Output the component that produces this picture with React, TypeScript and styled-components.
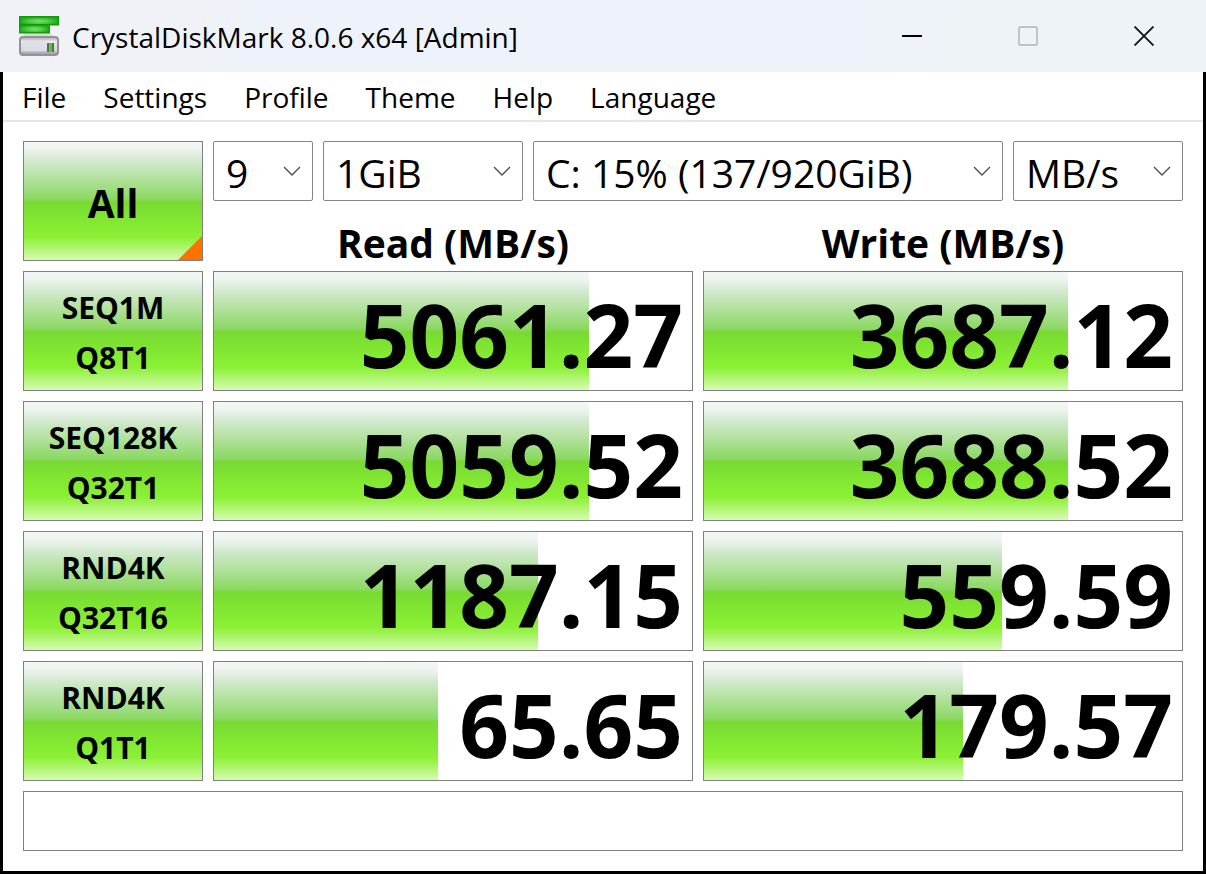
import React from "react";
import styled, { createGlobalStyle } from "styled-components";

const GREEN =
  "linear-gradient(to bottom, #f3f7f5 0%, #edf4ee 7%, #d3e9cf 16%, #8cd963 48%, #78da32 51%, #83e832 68%, #8cf036 81%, #d6fbb2 100%)";

const GlobalStyle = createGlobalStyle`
  *, *::before, *::after { box-sizing: border-box; }
  body {
    margin: 0;
    background: #000;
    color: #000;
    font-family: "Open Sans", "Noto Sans", sans-serif;
  }
  button, select { font-family: inherit; color: inherit; }
`;

const Window = styled.div`
  display: flex;
  flex-direction: column;
  min-height: 100vh;
`;

const TitleBar = styled.header`
  display: flex;
  align-items: center;
  height: 72px;
  padding-left: 19px;
  background: linear-gradient(105deg, #f1f2f7 0%, #f0f2f8 18%, #eef2fb 22%, #eef2fb 68%, #eef3f8 78%, #eef3f8 100%);
`;

const Title = styled.h1`
  flex: 1;
  margin: 0 0 0 13px;
  padding-top: 2px;
  font-size: 28px;
  font-weight: 400;
  line-height: 40px;
  white-space: nowrap;
`;

const CaptionButton = styled.button`
  display: flex;
  align-items: center;
  justify-content: center;
  width: 116px;
  height: 72px;
  padding: 0;
  border: 0;
  background: transparent;

  &:last-child { margin-right: 4px; }
`;

const Body = styled.main`
  display: flex;
  flex: 1;
  flex-direction: column;
  margin: 0 3px 3px;
  background: #fff;
`;

const MenuBar = styled.nav`
  display: flex;
  gap: 37px;
  height: 50px;
  padding: 2px 19px 0;
  border-bottom: 2px solid #e6e6e6;
`;

const MenuItem = styled.button`
  padding: 0;
  border: 0;
  background: transparent;
  font-size: 28px;
  line-height: 40px;
`;

const Content = styled.div`
  display: flex;
  flex-direction: column;
  gap: 10px;
  padding: 19px 20px 20px;
`;

const Row = styled.section`
  display: grid;
  grid-template-columns: 180px minmax(0, 1fr);
  gap: 10px;
  min-height: 120px;
`;

const TestButton = styled.button<{ $large?: boolean }>`
  position: relative;
  display: flex;
  flex-direction: column;
  align-items: center;
  justify-content: center;
  padding: 4px 0 0;
  border: 1px solid #808080;
  background: ${GREEN};
  font-size: ${(p) => (p.$large ? 39 : 30)}px;
  font-weight: 700;
  line-height: 50px;
`;

const Corner = styled.svg`
  position: absolute;
  right: 0;
  bottom: 0;
`;

const Header = styled.div`
  display: flex;
  flex-direction: column;
`;

const Selectors = styled.div`
  display: flex;
  gap: 10px;
`;

const SelectBox = styled.div<{ $share: number }>`
  display: grid;
  flex: ${(p) => p.$share} 1 0;
  min-width: 0;
  align-items: center;

  > * { grid-area: 1 / 1; }
  > svg { justify-self: end; margin-right: 12px; pointer-events: none; }
`;

const Select = styled.select`
  width: 100%;
  height: 60px;
  padding: 3px 40px 0 12px;
  border: 1px solid #868686;
  border-radius: 2px;
  background: #fff;
  font-size: 39px;
  line-height: 54px;
  appearance: none;
`;

const Pair = styled.div`
  display: grid;
  grid-template-columns: 1fr 1fr;
  gap: 10px;
`;

const Heading = styled.h2`
  margin: 0;
  padding-top: 15px;
  font-size: 39px;
  font-weight: 700;
  line-height: 54px;
  height: 60px;
  text-align: center;
  white-space: nowrap;
`;

const Meter = styled.output<{ $fill: number }>`
  display: flex;
  align-items: center;
  justify-content: flex-end;
  padding: 6px 9px 0 0;
  border: 1px solid #808080;
  background: ${GREEN} left / ${(p) => p.$fill}% 100% no-repeat #fff;
  font-size: 87px;
  font-weight: 700;
  line-height: 104px;
`;

const Status = styled.footer`
  height: 60px;
  border: 1px solid #808080;
`;

const menus = ["File", "Settings", "Profile", "Theme", "Help", "Language"];

const selectors = [
  { label: "Test count", value: "9", share: 100 },
  { label: "Test size", value: "1GiB", share: 200 },
  { label: "Drive", value: "C: 15% (137/920GiB)", share: 470 },
  { label: "Unit", value: "MB/s", share: 170 },
];

const tests = [
  { name: "SEQ1M", queue: "Q8T1", read: "5061.27", readFill: 78.5, write: "3687.12", writeFill: 76.2 },
  { name: "SEQ128K", queue: "Q32T1", read: "5059.52", readFill: 78.5, write: "3688.52", writeFill: 76.2 },
  { name: "RND4K", queue: "Q32T16", read: "1187.15", readFill: 67.8, write: "559.59", writeFill: 62.4 },
  { name: "RND4K", queue: "Q1T1", read: "65.65", readFill: 46.9, write: "179.57", writeFill: 54.2 },
];

function AppIcon() {
  return (
    <svg width="40" height="40" viewBox="0 0 40 40" aria-hidden="true">
      <defs>
        <radialGradient id="leaf" cx="0.5" cy="0.55" r="0.5">
          <stop offset="0" stopColor="#7fdc74" />
          <stop offset="0.6" stopColor="#4cc840" />
          <stop offset="1" stopColor="#1fae17" />
        </radialGradient>
        <linearGradient id="case" x1="0" y1="0" x2="0" y2="1">
          <stop offset="0" stopColor="#a8a8a8" />
          <stop offset="0.25" stopColor="#e9e9ef" />
          <stop offset="0.75" stopColor="#d2d2dc" />
          <stop offset="1" stopColor="#8b8b8d" />
        </linearGradient>
      </defs>
      <path d="M6 17h25l7 7H2z" fill="#dcdcdd" />
      <rect x="1" y="21" width="38" height="18" rx="3" fill="url(#case)" stroke="#939395" strokeWidth="2" />
      <path d="M4 25h23v10H4z" fill="#dedee8" opacity="0.8" />
      <rect x="0.75" y="8.750" width="29.500" height="8" fill="url(#leaf)" stroke="#14a00c" strokeWidth="1.500" />
      <rect x="0.75" y="0.750" width="38.500" height="8" fill="url(#leaf)" stroke="#109c0c" strokeWidth="1.500" />
      <rect x="28" y="27" width="7" height="9" fill="#5d6b58" />
      <rect x="30" y="27" width="3" height="9" fill="#44d419" />
    </svg>
  );
}

function Chevron() {
  return (
    <svg width="18" height="10" viewBox="0 0 18 10" fill="none" aria-hidden="true">
      <path d="M1 1l8 8 8-8" stroke="#505050" strokeWidth="1.400" />
    </svg>
  );
}

export default function App() {
  return (
    <Window>
      <GlobalStyle />
      <TitleBar>
        <AppIcon />
        <Title>CrystalDiskMark 8.0.6 x64 [Admin]</Title>
        <CaptionButton aria-label="Minimize">
          <svg width="20" height="20" viewBox="0 0 20 20">
            <path d="M0 10h20" stroke="#000" strokeWidth="2" />
          </svg>
        </CaptionButton>
        <CaptionButton aria-label="Maximize" disabled>
          <svg width="20" height="20" viewBox="0 0 20 20">
            <rect x="1" y="1" width="18" height="18" rx="1.500" fill="none" stroke="#bfc2c6" strokeWidth="2" />
          </svg>
        </CaptionButton>
        <CaptionButton aria-label="Close">
          <svg width="20" height="20" viewBox="0 0 20 20">
            <path d="M0.500 0.500l19 19M19.500 0.500l-19 19" stroke="#111" strokeWidth="1.800" />
          </svg>
        </CaptionButton>
      </TitleBar>
      <Body>
        <MenuBar>
          {menus.map((menu) => (
            <MenuItem key={menu}>{menu}</MenuItem>
          ))}
        </MenuBar>
        <Content>
          <Row>
            <TestButton $large>
              All
              <Corner width="24" height="24" viewBox="0 0 24 24" aria-hidden="true">
                <path d="M24 0v24H0z" fill="#ff7200" />
              </Corner>
            </TestButton>
            <Header>
              <Selectors>
                {selectors.map((s) => (
                  <SelectBox key={s.label} $share={s.share}>
                    <Select aria-label={s.label} defaultValue={s.value}>
                      <option>{s.value}</option>
                    </Select>
                    <Chevron />
                  </SelectBox>
                ))}
              </Selectors>
              <Pair>
                <Heading>Read (MB/s)</Heading>
                <Heading>Write (MB/s)</Heading>
              </Pair>
            </Header>
          </Row>
          {tests.map((t) => (
            <Row key={t.name + t.queue}>
              <TestButton>
                <span>{t.name}</span>
                <span>{t.queue}</span>
              </TestButton>
              <Pair>
                <Meter $fill={t.readFill} aria-label={`${t.name} ${t.queue} read`}>{t.read}</Meter>
                <Meter $fill={t.writeFill} aria-label={`${t.name} ${t.queue} write`}>{t.write}</Meter>
              </Pair>
            </Row>
          ))}
          <Status />
        </Content>
      </Body>
    </Window>
  );
}
